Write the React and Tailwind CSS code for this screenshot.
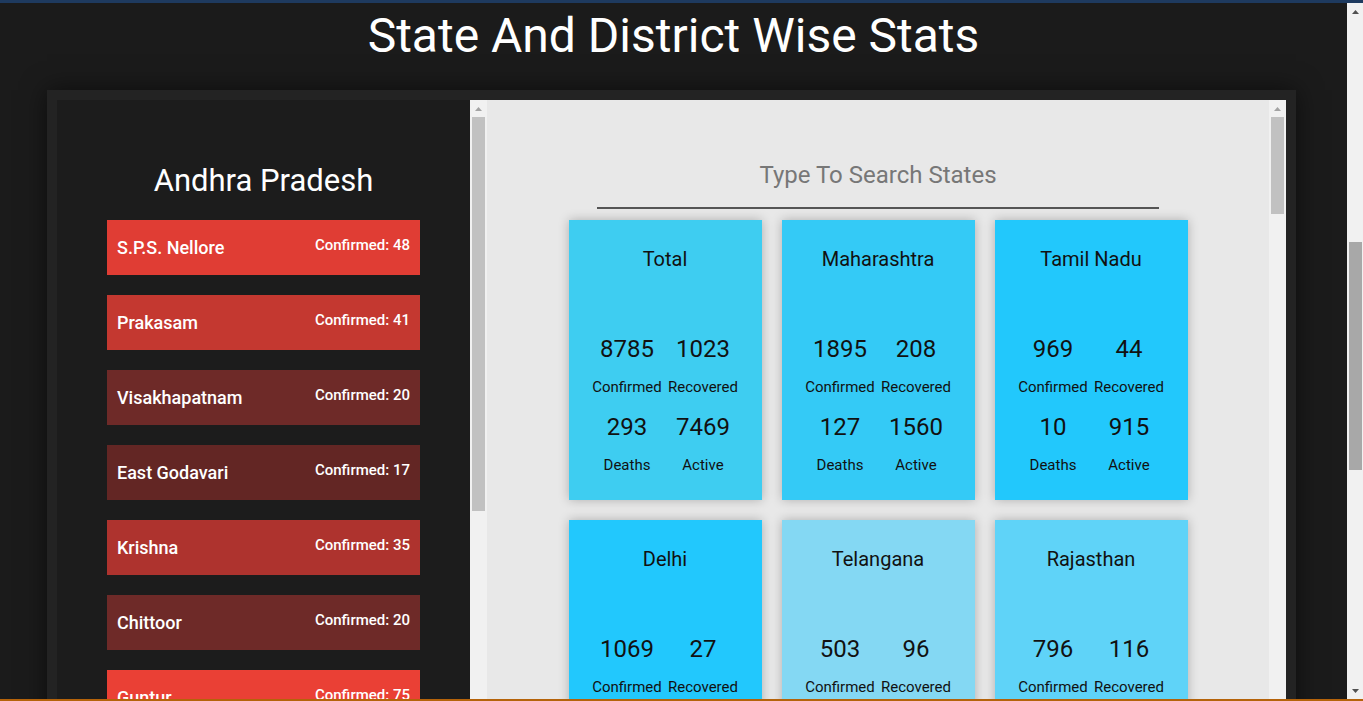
import React from "react";

const districts = [
  { name: "S.P.S. Nellore", n: 48, bg: "bg-[#e03d34]" },
  { name: "Prakasam", n: 41, bg: "bg-[#c43830]" },
  { name: "Visakhapatnam", n: 20, bg: "bg-[#6e2a28]" },
  { name: "East Godavari", n: 17, bg: "bg-[#632624]" },
  { name: "Krishna", n: 35, bg: "bg-[#ae332e]" },
  { name: "Chittoor", n: 20, bg: "bg-[#6e2a28]" },
  { name: "Guntur", n: 75, bg: "bg-[#ea4035]" },
  { name: "Kurnool", n: 84, bg: "bg-[#ea4035]" },
];

const states = [
  { name: "Total", c: 8785, r: 1023, d: 293, a: 7469, bg: "bg-[#3ecdf1]" },
  { name: "Maharashtra", c: 1895, r: 208, d: 127, a: 1560, bg: "bg-[#34caf6]" },
  { name: "Tamil Nadu", c: 969, r: 44, d: 10, a: 915, bg: "bg-[#22c8fc]" },
  { name: "Delhi", c: 1069, r: 27, d: 19, a: 1023, bg: "bg-[#22c8fd]" },
  { name: "Telangana", c: 503, r: 96, d: 14, a: 393, bg: "bg-[#84d8f3]" },
  { name: "Rajasthan", c: 796, r: 116, d: 3, a: 677, bg: "bg-[#5fd3f8]" },
];

function UpArrow({ color = "#a3a3a3" }) {
  return (
    <svg width="9" height="6" viewBox="0 0 9 6" className="block">
      <path d="M4.5 1 L8 5 L1 5 Z" fill={color} />
    </svg>
  );
}

function DownArrow({ color = "#505050" }) {
  return (
    <svg width="9" height="6" viewBox="0 0 9 6" className="block">
      <path d="M1 1 L8 1 L4.5 5 Z" fill={color} />
    </svg>
  );
}

function InnerScrollbar({ thumbH }) {
  return (
    <div className="w-[17px] shrink-0 bg-[#f1f1f1] flex flex-col items-center">
      <div className="h-[17px] w-full flex items-center justify-center">
        <UpArrow />
      </div>
      <div className={`w-[13px] bg-[#c1c1c1] ${thumbH}`} />
    </div>
  );
}

function Stat({ value, label }) {
  return (
    <div className="flex flex-col items-center">
      <div className="text-[24px] leading-[28px] text-[#111]">{value}</div>
      <div className="mt-[15px] text-[15px] leading-[18px] text-[#111]">{label}</div>
    </div>
  );
}

function StateCard({ s }) {
  return (
    <div className={`${s.bg} h-[280px] shadow-[0_0_10px_rgba(0,0,0,0.25)] flex flex-col items-center pt-[27px]`}>
      <div className="text-[20px] leading-[24px] text-[#111]">{s.name}</div>
      <div className="mt-[64px] grid grid-cols-[76px_76px] justify-center gap-y-[17px]">
        <Stat value={s.c} label="Confirmed" />
        <Stat value={s.r} label="Recovered" />
        <Stat value={s.d} label="Deaths" />
        <Stat value={s.a} label="Active" />
      </div>
    </div>
  );
}

export default function App() {
  return (
    <div className="w-[1363px] h-[701px] overflow-hidden flex flex-col bg-[#1b1b1b] font-['Roboto','Noto_Sans',sans-serif]">
      <div className="h-[3px] shrink-0 bg-[#1e3a5f]" />
      <div className="flex flex-1 min-h-0">
        <main className="flex-1 min-w-0 overflow-hidden">
          <h1 className="mt-[4px] text-center text-white text-[48px] leading-[58px] font-normal">
            State And District Wise Stats
          </h1>
          <div className="mt-[25px] ml-[47px] w-[1249px] bg-[#232323] p-[10px] shadow-[0_0_24px_rgba(0,0,0,0.55)]">
            <div className="flex h-[800px]">
              <section className="w-[413px] shrink-0 bg-[#1c1c1c] overflow-hidden pt-[62px]">
                <h2 className="text-center text-white text-[31px] leading-[37px] font-normal">
                  Andhra Pradesh
                </h2>
                <div className="mt-[21px] flex flex-col gap-[20px] px-[50px]">
                  {districts.map((d) => (
                    <div
                      key={d.name}
                      className={`${d.bg} h-[55px] flex justify-between px-[10px] text-white`}
                    >
                      <span className="pt-[17px] text-[18px] leading-[22px] font-medium">{d.name}</span>
                      <span className="pt-[16px] text-[15px] leading-[18px] font-medium">
                        Confirmed: {d.n}
                      </span>
                    </div>
                  ))}
                </div>
              </section>
              <InnerScrollbar thumbH="h-[394px]" />
              <section className="flex-1 bg-[#e8e8e8] overflow-hidden pt-[43px]">
                <div className="flex justify-center">
                  <input
                    type="text"
                    placeholder="Type To Search States"
                    className="w-[562px] h-[66px] bg-transparent border-b-2 border-[#555] text-center text-[24px] text-[#333] placeholder:text-[#777] outline-none"
                  />
                </div>
                <div className="mt-[11px] grid grid-cols-[193px_193px_193px] justify-center gap-[20px]">
                  {states.map((s) => (
                    <StateCard key={s.name} s={s} />
                  ))}
                </div>
              </section>
              <InnerScrollbar thumbH="h-[97px]" />
            </div>
          </div>
        </main>
        <div className="w-[16px] shrink-0 bg-[#f1f1f1] flex flex-col items-center">
          <div className="h-[17px] w-full flex items-center justify-center">
            <UpArrow color="#505050" />
          </div>
          <div className="mt-[222px] w-[13px] h-[228px] bg-[#a8a8a8]" />
          <div className="flex-1" />
          <div className="h-[17px] w-full flex items-center justify-center">
            <DownArrow />
          </div>
        </div>
      </div>
      <div className="h-[2px] shrink-0 bg-[#b5630a]" />
    </div>
  );
}
